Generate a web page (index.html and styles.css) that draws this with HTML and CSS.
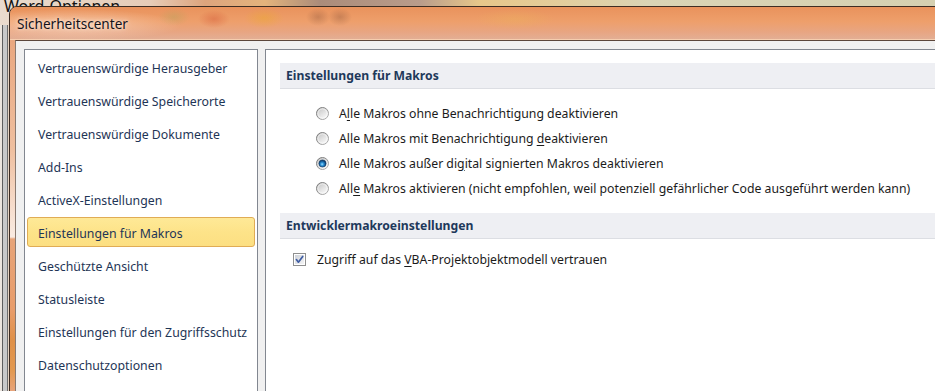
FILE: index.html
```html
<!DOCTYPE html>
<html lang="de">
<head>
<meta charset="utf-8">
<title>Sicherheitscenter</title>
<link rel="stylesheet" href="styles.css">
</head>
<body>
<svg class="defs" width="0" height="0" aria-hidden="true">
  <defs>
    <linearGradient id="ringGrad" x1="0" y1="0" x2="1" y2="1">
      <stop offset="0" stop-color="#6f6f6f"/>
      <stop offset="1" stop-color="#b5b5b5"/>
    </linearGradient>
    <linearGradient id="holeGrad" x1="0.2" y1="0.1" x2="0.8" y2="0.95">
      <stop offset="0" stop-color="#c9c9c9"/>
      <stop offset="0.55" stop-color="#e6e6e6"/>
      <stop offset="1" stop-color="#fbfbfb"/>
    </linearGradient>
    <radialGradient id="dotGrad" cx="0.45" cy="0.6" r="0.6">
      <stop offset="0" stop-color="#9fe2ff"/>
      <stop offset="0.35" stop-color="#2e93d8"/>
      <stop offset="0.8" stop-color="#0d477f"/>
      <stop offset="1" stop-color="#0a2f57"/>
    </radialGradient>
    <linearGradient id="boxGrad" x1="0" y1="0" x2="1" y2="1">
      <stop offset="0" stop-color="#cdd1d8"/>
      <stop offset="1" stop-color="#f5f5f6"/>
    </linearGradient>
    <symbol id="radio-off" viewBox="0 0 13 13">
      <circle cx="6.5" cy="6.5" r="6" fill="url(#holeGrad)" stroke="url(#ringGrad)" stroke-width="1"/>
      <circle cx="6.5" cy="6.5" r="4.6" fill="none" stroke="#ffffff" stroke-opacity="0.55" stroke-width="1"/>
    </symbol>
    <symbol id="radio-on" viewBox="0 0 13 13">
      <circle cx="6.5" cy="6.5" r="6" fill="url(#holeGrad)" stroke="url(#ringGrad)" stroke-width="1"/>
      <circle cx="6.5" cy="6.5" r="3.6" fill="url(#dotGrad)" stroke="#0b3661" stroke-width="0.6"/>
    </symbol>
  </defs>
</svg>

<div class="desk">
  <div class="bgwin">
    <div class="bgwin-title">Word-Optionen</div>
    <div class="bgwin-body"></div>
  </div>

  <div class="dlg">
    <div class="titlebar"><span class="title">Sicherheitscenter</span></div>
    <div class="dlg-row">
      <div class="lframe"></div>
      <div class="client">
        <ul class="nav">
          <li class="nav-item">Vertrauenswürdige Herausgeber</li>
          <li class="nav-item">Vertrauenswürdige Speicherorte</li>
          <li class="nav-item">Vertrauenswürdige Dokumente</li>
          <li class="nav-item">Add-Ins</li>
          <li class="nav-item">ActiveX-Einstellungen</li>
          <li class="nav-item is-selected">Einstellungen für Makros</li>
          <li class="nav-item">Geschützte Ansicht</li>
          <li class="nav-item">Statusleiste</li>
          <li class="nav-item">Einstellungen für den Zugriffsschutz</li>
          <li class="nav-item">Datenschutzoptionen</li>
        </ul>
        <div class="pane">
          <div class="sec-head">Einstellungen für Makros</div>
          <div class="radios">
            <div class="opt"><svg class="radio" width="13" height="13"><use href="#radio-off"/></svg><span>A<u>l</u>le Makros ohne Benachrichtigung deaktivieren</span></div>
            <div class="opt"><svg class="radio" width="13" height="13"><use href="#radio-off"/></svg><span>Alle Makros mit Benachrichtigung <u>d</u>eaktivieren</span></div>
            <div class="opt"><svg class="radio" width="13" height="13"><use href="#radio-on"/></svg><span>Alle Makros außer di<u>g</u>ital signierten Makros deaktivieren</span></div>
            <div class="opt"><svg class="radio" width="13" height="13"><use href="#radio-off"/></svg><span>All<u>e</u> Makros aktivieren (nicht empfohlen, weil potenziell gefährlicher Code ausgeführt werden kann)</span></div>
          </div>
          <div class="sec-head sec-head-2">Entwicklermakroeinstellungen</div>
          <div class="check-row">
            <svg class="check" width="13" height="13" viewBox="0 0 13 13">
              <rect x="0.5" y="0.5" width="12" height="12" fill="#ffffff" stroke="#8f8f8f"/>
              <rect x="2" y="2" width="9" height="9" fill="url(#boxGrad)"/>
              <path d="M3.4 6.6 L5.4 9.2 L9.7 3.4" fill="none" stroke="#3f5da3" stroke-width="1.7" stroke-linecap="round" stroke-linejoin="round"/>
            </svg>
            <span>Zugriff auf das <u>V</u>BA-Projektobjektmodell vertrauen</span>
          </div>
        </div>
      </div>
    </div>
  </div>
</div>
</body>
</html>
```
FILE: styles.css
```css
html, body {
  margin: 0;
  padding: 0;
}
body {
  width: 935px;
  height: 391px;
  overflow: hidden;
  font-family: "Noto Sans", "Open Sans", sans-serif;
  background: #e0cdb9;
}
.defs {
  position: absolute;
  width: 0;
  height: 0;
  overflow: hidden;
}
.desk {
  position: relative;
  width: 935px;
  height: 391px;
  overflow: hidden;
}

/* background window (Word-Optionen) */
.bgwin {
  position: absolute;
  inset: 0;
  display: flex;
  flex-direction: column;
}
.bgwin-title {
  height: 25px;
  padding-left: 4px;
  font-size: 16px;
  line-height: 13px;
  color: #111;
  background: linear-gradient(to right, #eadbce 0, #e6ccb7 150px, #dda47d 205px, #e3b37c 265px, #ab8c7a 320px, #b99c8b 420px, #e7c78a 480px, #e3cd9c 560px, #dad4b5 650px, #d5d0b1 935px);
}
.bgwin-body {
  flex: 1;
  background:
    linear-gradient(to right, #ece5de 0 2px, #5d5d5d 2px 3px, #c8c8c8 3px 7px, #6e6e6e 7px 8px, #e6d3c2 8px 9px, transparent 9px);
}

/* dialog window */
.dlg {
  position: absolute;
  left: 9px;
  top: 6px;
  width: 960px;
  height: 420px;
  border: 1px solid #3e2d23;
  border-radius: 8px 8px 0 0;
  overflow: hidden;
  display: flex;
  flex-direction: column;
  background: #e8a47a;
}
.titlebar {
  height: 32px;
  flex: none;
  padding-left: 7px;
  border-bottom: 1px solid #f6cdae;
  background:
    radial-gradient(ellipse 110px 16px at 62px 18px, rgba(255, 232, 214, 0.55), rgba(255, 232, 214, 0) 100%),
    radial-gradient(ellipse 16px 9px at 164px 10px, rgba(170, 165, 90, 0.35), rgba(170, 165, 90, 0)),
    radial-gradient(ellipse 16px 9px at 204px 12px, rgba(205, 70, 40, 0.35), rgba(205, 70, 40, 0)),
    radial-gradient(ellipse 20px 10px at 254px 11px, rgba(235, 170, 45, 0.45), rgba(235, 170, 45, 0)),
    radial-gradient(ellipse 12px 9px at 308px 10px, rgba(120, 70, 50, 0.3), rgba(120, 70, 50, 0)),
    radial-gradient(ellipse 12px 9px at 330px 10px, rgba(120, 70, 50, 0.3), rgba(120, 70, 50, 0)),
    radial-gradient(ellipse 40px 10px at 505px 12px, rgba(235, 180, 90, 0.35), rgba(235, 180, 90, 0)),
    linear-gradient(to bottom, #e9925c 0%, #ee9f6b 45%, #e8a582 78%, #e3ae94 100%);
}
.title {
  display: block;
  font-size: 13.6px;
  line-height: 33px;
  color: #14121a;
  text-shadow: 0 0 6px rgba(255, 236, 222, 0.9), 0 0 3px rgba(255, 236, 222, 0.8);
}
.dlg-row {
  flex: 1;
  display: flex;
}
.lframe {
  width: 5px;
  flex: none;
  background: linear-gradient(to bottom, #e9a77f 0px, #efbf9f 110px, #f6dccb 165px, #f9ebe2 197px, #e7a479 199px, #e89c6a 270px, #df9048 300px, #e2984f 330px, #e8a47a 351px);
}
.client {
  flex: 1;
  display: flex;
  align-items: stretch;
  gap: 7px;
  padding: 8px 0 0 8px;
  background: #f0f0f0;
  border-top: 1px solid #5b463b;
  border-left: 1px solid #8a7a70;
}

/* left navigation list */
.nav {
  list-style: none;
  margin: 0;
  width: 228px;
  flex: none;
  padding: 2px;
  background: #ffffff;
  border: 1px solid #828790;
}
.nav-item {
  height: 28px;
  line-height: 31px;
  margin-bottom: 3px;
  padding-left: 10px;
  border: 1px solid transparent;
  border-radius: 3px;
  font-size: 12.3px;
  color: #1e3556;
  white-space: nowrap;
}
.nav-item.is-selected {
  background: linear-gradient(to bottom, #fee997 0%, #fde389 50%, #fcdf82 100%);
  border-color: #e0ac55;
}

/* right content pane */
.pane {
  flex: 1;
  background: #ffffff;
  border: 1px solid #828790;
  padding: 13px 0 0 14px;
}
.sec-head {
  height: 25px;
  line-height: 26px;
  padding-left: 6px;
  background: #eeeff3;
  border-bottom: 1px solid #dcdee3;
  font-size: 12.2px;
  font-weight: 700;
  color: #1e395b;
  white-space: nowrap;
}
.sec-head-2 {
  margin-top: 12px;
}
.radios {
  margin-top: 12px;
  padding-left: 36px;
}
.opt,
.check-row {
  height: 25px;
  display: flex;
  align-items: center;
  font-size: 12.25px;
  color: #1b1b1b;
  white-space: nowrap;
}
.radio {
  flex: none;
  margin-right: 10px;
}
.check-row {
  margin-top: 8px;
  padding-left: 13px;
}
.check {
  flex: none;
  margin-right: 11px;
}
u {
  text-decoration: underline;
  text-decoration-thickness: 1px;
  text-underline-offset: 2px;
}
```
